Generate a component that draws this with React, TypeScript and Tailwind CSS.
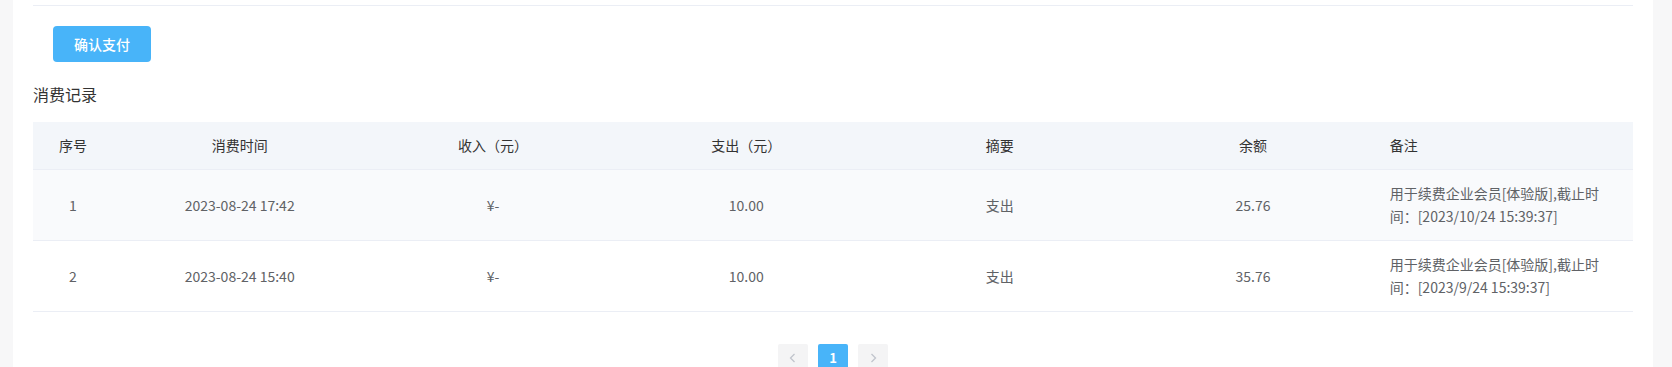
import React from 'react';

const rows = [
  {
    id: 1,
    time: '2023-08-24 17:42',
    income: '¥-',
    expense: '10.00',
    summary: '支出',
    balance: '25.76',
    remark: '用于续费企业会员[体验版],截止时间：[2023/10/24 15:39:37]',
  },
  {
    id: 2,
    time: '2023-08-24 15:40',
    income: '¥-',
    expense: '10.00',
    summary: '支出',
    balance: '35.76',
    remark: '用于续费企业会员[体验版],截止时间：[2023/9/24 15:39:37]',
  },
];

const headers = ['序号', '消费时间', '收入（元）', '支出（元）', '摘要', '余额'];

export default function App() {
  return (
    <div
      className="flex h-[367px] overflow-hidden bg-[#f7f7f8] pl-[13px] pr-[19px]"
      style={{ fontFamily: '"Noto Sans CJK SC", "Noto Sans", sans-serif' }}
    >
      <div className="flex-1 bg-white px-5">
        {/* divider from the form above */}
        <div className="h-[6px] border-b border-[#ebeef5]" />

        <div className="pl-5 pt-5">
          <button className="h-9 w-[98px] rounded-[4px] bg-[#48b4f9] text-[14px] font-medium text-white">
            确认支付
          </button>
        </div>

        <h3 className="mt-[21px] text-[16px] leading-[22px] text-[#333]">消费记录</h3>

        {/* Records table */}
        <table className="mt-[17px] w-full table-fixed border-collapse text-[14px]">
          <colgroup>
            <col className="w-[80px]" />
            <col />
            <col />
            <col />
            <col />
            <col />
            <col />
          </colgroup>
          <thead>
            <tr className="bg-[#f3f6fa]">
              {headers.map((h) => (
                <th
                  key={h}
                  className="border-b border-[#ebeef5] py-3 text-center font-normal text-[#333]"
                >
                  <div className="px-[10px] leading-[23px]">{h}</div>
                </th>
              ))}
              <th className="border-b border-[#ebeef5] py-3 text-left font-normal text-[#333]">
                <div className="px-[10px] leading-[23px]">备注</div>
              </th>
            </tr>
          </thead>
          <tbody>
            {rows.map((r, i) => (
              <tr key={r.id} className={i === 0 ? 'bg-[#f9fafc]' : 'bg-white'}>
                {[r.id, r.time, r.income, r.expense, r.summary, r.balance].map((v, j) => (
                  <td
                    key={j}
                    className="border-b border-[#ebeef5] py-3 text-center text-[#606266]"
                  >
                    <div className="px-[10px] leading-[23px]">{v}</div>
                  </td>
                ))}
                <td className="border-b border-[#ebeef5] py-3 text-left text-[#606266]">
                  <div className="pl-[10px] pr-[20px] leading-[23px]">{r.remark}</div>
                </td>
              </tr>
            ))}
          </tbody>
        </table>

        {/* Pagination */}
        <div className="mt-[32px] flex justify-center gap-[10px]">
          <button className="flex h-7 w-[30px] items-center justify-center rounded-[2px] bg-[#f4f4f5] text-[#c0c4cc]">
            <svg width="14" height="14" viewBox="0 0 14 14" fill="none">
              <path d="M8.5 3 4.5 7l4 4" stroke="currentColor" strokeWidth="1.3" />
            </svg>
          </button>
          <button className="flex h-7 w-[30px] items-center justify-center rounded-[2px] bg-[#48b4f9] text-[13px] font-bold text-white">
            1
          </button>
          <button className="flex h-7 w-[30px] items-center justify-center rounded-[2px] bg-[#f4f4f5] text-[#c0c4cc]">
            <svg width="14" height="14" viewBox="0 0 14 14" fill="none">
              <path d="M5.5 3l4 4-4 4" stroke="currentColor" strokeWidth="1.3" />
            </svg>
          </button>
        </div>
      </div>
    </div>
  );
}
